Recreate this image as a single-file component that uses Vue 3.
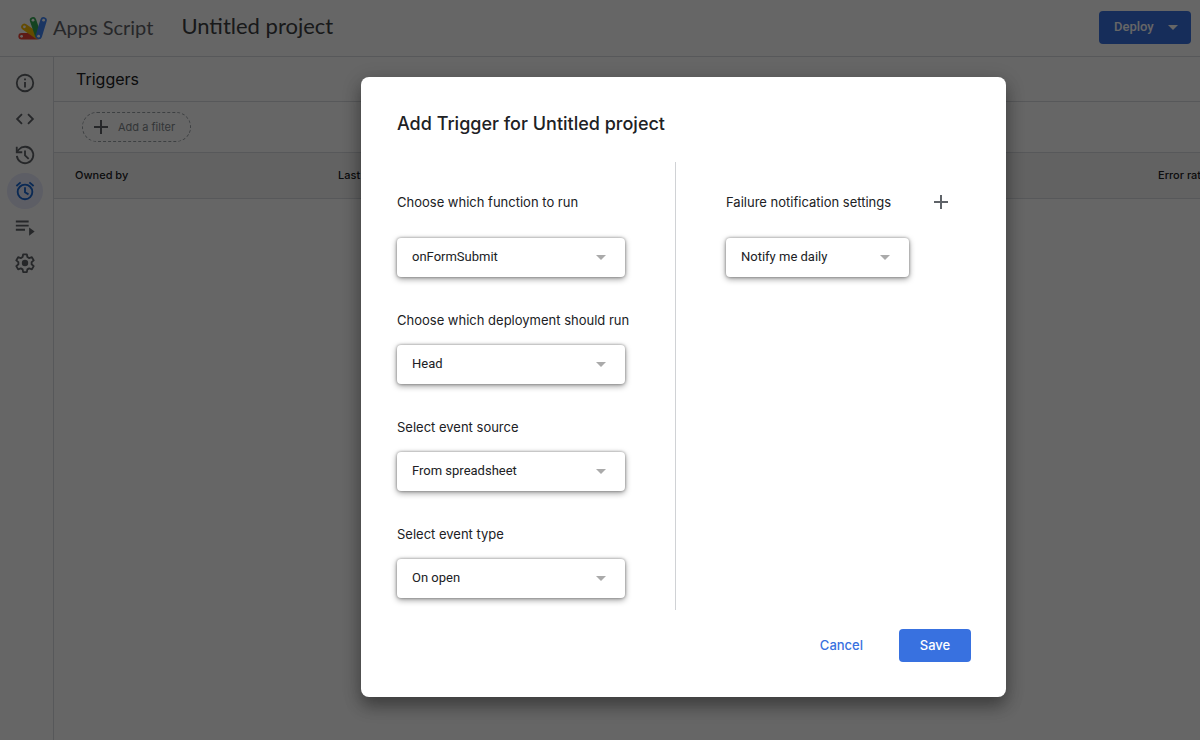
<script setup>
const nav = [
  { id: 'overview', label: 'Overview' },
  { id: 'editor', label: 'Editor' },
  { id: 'history', label: 'Project history' },
  { id: 'triggers', label: 'Triggers', active: true },
  { id: 'executions', label: 'Executions' },
  { id: 'settings', label: 'Project settings' },
]

const fields = [
  { id: 'function', label: 'Choose which function to run', value: 'onFormSubmit' },
  { id: 'deployment', label: 'Choose which deployment should run', value: 'Head' },
  { id: 'source', label: 'Select event source', value: 'From spreadsheet' },
  { id: 'type', label: 'Select event type', value: 'On open' },
]
</script>

<template>
  <div class="app">
    <header class="topbar">
      <svg class="logo" viewBox="0 0 30 26" aria-hidden="true">
        <g stroke-linecap="round" stroke-width="6.4" fill="none">
          <path d="M4.6 22.3H20" stroke="#ea4335" />
          <path d="M7.4 12.8 20 21.6" stroke="#fbbc04" />
          <path d="M16 6.2 21 21" stroke="#34a853" />
          <path d="M26.600 6.200 21.800 22" stroke="#4285f4" />
        </g>
        <g fill="#fff">
          <circle cx="4.6" cy="22.3" r="1.4" />
          <circle cx="7.4" cy="12.8" r="1.4" />
          <circle cx="16" cy="6.2" r="1.4" />
          <circle cx="26.6" cy="6.2" r="1.4" />
          <circle cx="21.6" cy="22.200" r="1.4" />
        </g>
      </svg>
      <span class="brand">Apps Script</span>
      <h1 class="project">Untitled project</h1>
      <button class="deploy" type="button">
        Deploy
        <svg viewBox="0 0 10 5" width="10" height="5" aria-hidden="true"><path d="M0 0h10L5 5z" fill="currentColor" /></svg>
      </button>
    </header>

    <div class="body">
      <nav class="rail">
        <button v-for="item in nav" :key="item.id" type="button" class="rail-item" :class="{ active: item.active }" :aria-label="item.label">
          <svg viewBox="0 0 24 24" fill="none" stroke="currentColor" stroke-width="2" aria-hidden="true">
            <template v-if="item.id === 'overview'">
              <circle cx="12" cy="12" r="9" />
              <path d="M12 11v6M12 7v2" />
            </template>
            <path v-else-if="item.id === 'editor'" d="M8.700 6.700 3.400 12l5.300 5.300M15.300 6.700l5.300 5.300-5.300 5.300" />
            <template v-else-if="item.id === 'history'">
              <path d="M3.100 13a9 9 0 1 0 2.200-7L3 8.600" />
              <path d="M3 3v6h6M12 7v5.400l4 3.800" />
            </template>
            <template v-else-if="item.id === 'triggers'">
              <circle cx="12" cy="13" r="8" />
              <path d="M12 8v5.400l3.800 2.300M2.600 6.500l4.600-3.900M21.400 6.500l-4.600-3.900" />
            </template>
            <template v-else-if="item.id === 'executions'">
              <path d="M2 6h14M2 10.500h14M2 15h10" />
              <path d="M16.500 12.500v9l6-4.500z" fill="currentColor" stroke="none" />
            </template>
            <template v-else>
              <path stroke-linejoin="round" d="M10 2.500h4l.6 3 2 1.150 2.900-1 2 3.450-2.300 2v2.300l2.300 2-2 3.450-2.900-1-2 1.150-.6 3h-4l-.6-3-2-1.150-2.900 1-2-3.450 2.300-2v-2.300l-2.300-2 2-3.450 2.900 1 2-1.150z" />
              <circle cx="12" cy="12" r="3.500" fill="currentColor" stroke="none" />
            </template>
          </svg>
        </button>
      </nav>

      <main class="main">
        <h2 class="section-title">Triggers</h2>
        <div class="filters">
          <button class="filter" type="button">
            <svg viewBox="0 0 14 14" width="14" height="14" aria-hidden="true"><path d="M7 0v14M0 7h14" stroke="#5f6368" stroke-width="2" /></svg>
            Add a filter
          </button>
        </div>
        <table class="triggers">
          <thead>
            <tr>
              <th class="owner" scope="col">Owned by</th>
              <th scope="col">Last run</th>
              <th class="rate" scope="col">Error rate</th>
            </tr>
          </thead>
        </table>
      </main>
    </div>

    <div class="scrim">
      <form class="dialog" role="dialog" aria-labelledby="dialog-title" @submit.prevent>
        <h2 id="dialog-title" class="dialog-title">Add Trigger for Untitled project</h2>
        <div class="columns">
          <div class="column">
            <div v-for="field in fields" :key="field.id" class="field">
              <label class="label" :for="field.id">{{ field.label }}</label>
              <div class="picker">
                <select :id="field.id"><option>{{ field.value }}</option></select>
                <svg class="caret" viewBox="0 0 10 5" aria-hidden="true"><path d="M0 0h10L5 5z" fill="#aaa" /></svg>
              </div>
            </div>
          </div>
          <div class="column notify">
            <div class="notify-head">
              <label class="label" for="notify">Failure notification settings</label>
              <button class="add" type="button" aria-label="Add notification">
                <svg viewBox="0 0 14 14" width="14" height="14" aria-hidden="true"><path d="M7 0v14M0 7h14" stroke="#5f6368" stroke-width="2" /></svg>
              </button>
            </div>
            <div class="picker narrow">
              <select id="notify"><option>Notify me daily</option></select>
              <svg class="caret" viewBox="0 0 10 5" aria-hidden="true"><path d="M0 0h10L5 5z" fill="#aaa" /></svg>
            </div>
          </div>
        </div>
        <div class="actions">
          <button class="cancel" type="button">Cancel</button>
          <button class="save" type="submit">Save</button>
        </div>
      </form>
    </div>
  </div>
</template>

<style>
body {
  margin: 0;
}
</style>

<style scoped>
* {
  box-sizing: border-box;
}
.app {
  position: relative;
  display: flex;
  flex-direction: column;
  min-height: 100vh;
  overflow: hidden;
  background: #fff;
  color: #202124;
  font-family: Inter, "Liberation Sans", sans-serif;
}
button {
  border: 0;
  padding: 0;
  background: none;
  font-family: inherit;
  cursor: pointer;
}
h1,
h2 {
  margin: 0;
  font-weight: 400;
}
.topbar {
  display: flex;
  align-items: center;
  height: 57px;
  padding: 0 9px 2px 17px;
  border-bottom: 1px solid #dadce0;
}
.logo {
  width: 30px;
  height: 26px;
  margin-right: 6px;
}
.brand {
  font: 20px/28px Lato, sans-serif;
  color: #5f6368;
}
.project {
  margin-left: 28px;
  padding-bottom: 2px;
  color: #3c4043;
  font: 22px/28px Lato, sans-serif;
}
.deploy {
  display: flex;
  align-items: center;
  justify-content: space-between;
  width: 92px;
  height: 33px;
  margin-left: auto;
  padding: 0 13px 0 15px;
  border-radius: 4px;
  background: #3871e0;
  color: #fff;
  font: 500 13px/20px Roboto, sans-serif;
}
.body {
  display: flex;
  flex: 1;
}
.rail {
  display: flex;
  flex: none;
  flex-direction: column;
  align-items: center;
  width: 54px;
  padding: 8px 3px 0 0;
  border-right: 1px solid #dadce0;
}
.rail-item {
  display: grid;
  place-items: center;
  width: 36px;
  height: 36px;
  border-radius: 50%;
  color: #5f6368;
}
.rail-item svg {
  width: 22px;
  height: 22px;
}
.rail-item.active {
  background: #e8eafd;
  color: #1967d2;
}
.main {
  flex: 1;
  min-width: 0;
}
.section-title {
  height: 45px;
  padding-left: 22px;
  border-bottom: 1px solid #dadce0;
  font-size: 16px;
  line-height: 44px;
}
.filters {
  display: flex;
  align-items: center;
  height: 51px;
  padding-left: 28px;
  border-bottom: 1px solid #dadce0;
}
.filter {
  display: flex;
  align-items: center;
  gap: 10px;
  height: 30px;
  padding: 0 15px 0 11px;
  border: 1px dashed #9aa0a6;
  border-radius: 15px;
  color: #80868b;
  font-size: 11px;
}
.triggers {
  width: 100%;
  border-collapse: collapse;
  table-layout: fixed;
}
.triggers th {
  height: 45px;
  padding: 0;
  border-bottom: 1px solid #dadce0;
  background: #f5f5f5;
  font-size: 11px;
  font-weight: 500;
  text-align: left;
  white-space: nowrap;
}
.triggers .owner {
  width: 284px;
  padding-left: 21px;
}
.triggers .rate {
  width: 42px;
}
.scrim {
  position: absolute;
  inset: 0;
  display: grid;
  place-items: center;
  padding: 34px 0 0 167px;
  background: rgba(0, 0, 0, 0.6);
}
.dialog {
  width: 645px;
  padding: 35px 35px 35px 36px;
  border-radius: 8px;
  background: #fff;
  box-shadow: 0 10px 16px rgba(0, 0, 0, 0.28), 0 4px 20px rgba(0, 0, 0, 0.2);
}
.dialog-title {
  margin-bottom: 26px;
  font-size: 18px;
  font-weight: 500;
  line-height: 24px;
}
.columns {
  display: flex;
}
.column {
  display: flex;
  flex: 1;
  flex-direction: column;
  gap: 33px;
  padding: 20px 0 12px;
}
.notify {
  flex: 0 0 296px;
  gap: 16px;
  padding-left: 50px;
  border-left: 1px solid #d0d2d5;
}
.field {
  display: flex;
  flex-direction: column;
  gap: 15px;
}
.field:first-child {
  gap: 26px;
  padding-top: 10px;
}
.label {
  font-size: 13px;
  line-height: 20px;
  white-space: nowrap;
}
.notify-head {
  display: flex;
  align-items: center;
  justify-content: space-between;
  width: 235px;
}
.add {
  display: grid;
  place-items: center;
  width: 40px;
  height: 40px;
}
.picker {
  position: relative;
  width: 228px;
}
.picker.narrow {
  width: 183px;
}
.picker select {
  display: block;
  width: 100%;
  height: 39px;
  padding: 0 36px 1px 15px;
  border: 0;
  border-radius: 4px;
  appearance: none;
  background: #fff;
  box-shadow: 0 0 3px rgba(0, 0, 0, 0.4), 0 2px 6px rgba(0, 0, 0, 0.4);
  color: #202124;
  font: 13px/20px Roboto, sans-serif;
}
.caret {
  position: absolute;
  top: 17px;
  right: 19px;
  width: 10px;
  height: 5px;
  pointer-events: none;
}
.actions {
  display: flex;
  justify-content: flex-end;
  gap: 20px;
  margin-top: 19px;
}
.actions button {
  height: 33px;
  padding: 0 16px 1px;
  border-radius: 4px;
  font-size: 13px;
  font-weight: 500;
}
.actions .cancel {
  color: #3871e0;
}
.actions .save {
  width: 72px;
  background: #3871e0;
  color: #fff;
}
</style>
